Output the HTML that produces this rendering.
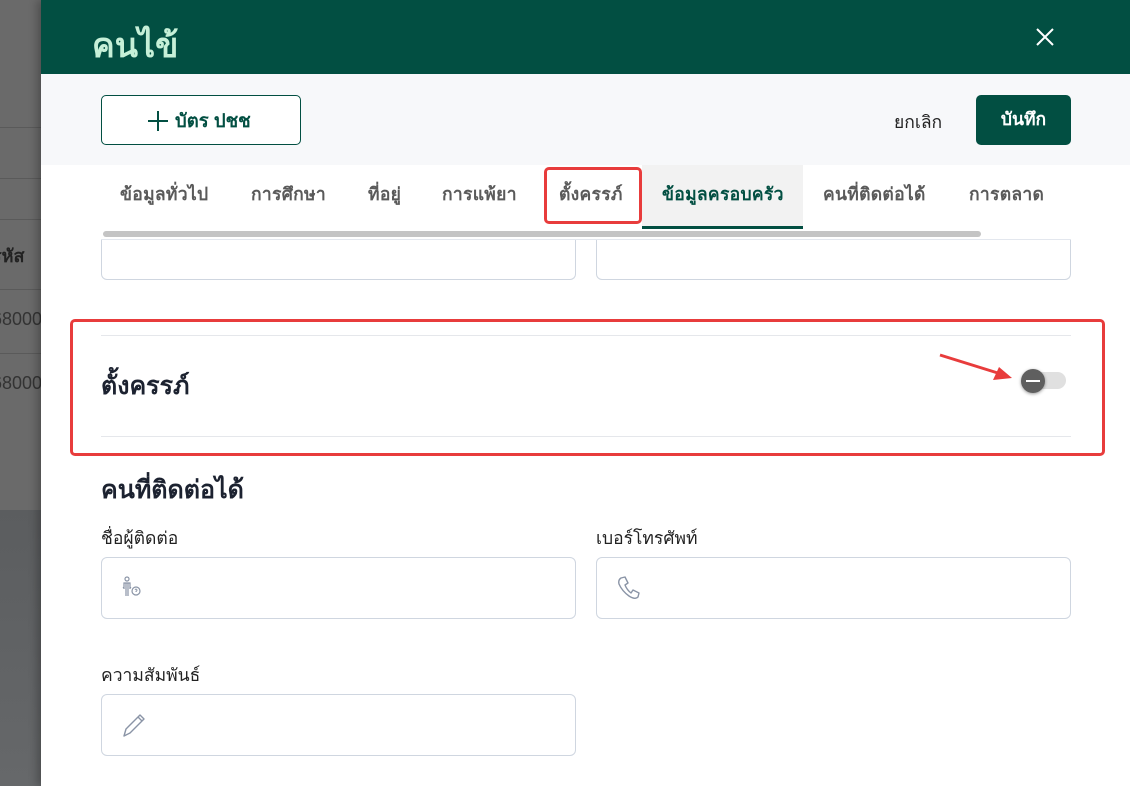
<!DOCTYPE html>
<html><head><meta charset="utf-8"><style>
*{box-sizing:border-box;margin:0;padding:0}
body{width:1130px;height:786px;overflow:hidden;position:relative;font-family:"Liberation Sans","DejaVu Sans",sans-serif;background:#fff}
.abs{position:absolute}
.left{left:0;top:0;width:41px;height:786px;background:linear-gradient(#6a6a6a 0,#6a6a6a 510px,#5b5d5f 510px,#66686a 786px);overflow:hidden}
.left .ln{position:absolute;left:0;width:41px;height:1px;background:#5a5a5a}
.left .t{position:absolute;left:-8px;color:#222;font-size:18px}
.drawer{left:41px;top:0;width:1089px;height:786px;background:#fff;box-shadow:-4px 0 8px rgba(0,0,0,.25)}
.hdr{left:41px;top:0;width:1089px;height:74px;background:#024f42}
.title{left:92px;top:18px;color:#c6f0d8;font-size:34px;font-weight:bold}
.bar{left:41px;top:74px;width:1089px;height:91px;background:#f7f8fa}
.tab{top:180px;font-size:17.5px;font-weight:bold;color:#5a5a5a;letter-spacing:.3px}
.inp{border:1px solid #cfd6e0;border-radius:6px;background:#fff}
.lbl{font-size:17.5px;color:#222}
.h{font-size:25px;font-weight:bold;color:#1c2230}
</style></head><body>
<div class="abs left">
<div class="ln" style="top:127px"></div><div class="ln" style="top:178px"></div><div class="ln" style="top:219px"></div><div class="ln" style="top:289px"></div><div class="ln" style="top:353px"></div>
<div class="t" style="top:241px;font-weight:bold">รหัส</div>
<div class="t" style="top:309px;color:#333">68000</div>
<div class="t" style="top:373px;color:#333">68000</div>
</div>
<div class="abs drawer"></div>
<div class="abs hdr"></div>
<div class="abs title">คนไข้</div>
<svg class="abs" style="left:1035px;top:27px" width="20" height="20" viewBox="0 0 20 20"><path d="M2 2L18 18M18 2L2 18" stroke="#fff" stroke-width="2"/></svg>
<div class="abs bar"></div>
<div class="abs" style="left:101px;top:95px;width:200px;height:50px;border:1px solid #024f42;border-radius:5px;background:#fff"></div>
<svg class="abs" style="left:147px;top:110px" width="22" height="22" viewBox="0 0 22 22"><path d="M11 1V21M1 11H21" stroke="#024f42" stroke-width="2"/></svg>
<div class="abs" style="left:175px;top:107px;font-size:18.5px;font-weight:bold;color:#024f42">บัตร ปชช</div>
<div class="abs" style="left:894px;top:108px;font-size:17.5px;color:#222">ยกเลิก</div>
<div class="abs" style="left:976px;top:95px;width:95px;height:50px;background:#024f42;border-radius:5px;color:#fff;font-size:17.5px;font-weight:bold;text-align:center;line-height:48px">บันทึก</div>
<div class="abs" style="left:642px;top:165px;width:161px;height:62px;background:#f2f2f2"></div>
<div class="abs" style="left:642px;top:226px;width:161px;height:3px;background:#024f42"></div>
<div class="abs tab" style="left:120px">ข้อมูลทั่วไป</div>
<div class="abs tab" style="left:251px">การศึกษา</div>
<div class="abs tab" style="left:368px">ที่อยู่</div>
<div class="abs tab" style="left:442px">การแพ้ยา</div>
<div class="abs tab" style="left:559px">ตั้งครรภ์</div>
<div class="abs tab" style="left:662px;color:#024f42">ข้อมูลครอบครัว</div>
<div class="abs tab" style="left:823px">คนที่ติดต่อได้</div>
<div class="abs tab" style="left:969px">การตลาด</div>
<div class="abs" style="left:544px;top:167px;width:98px;height:57px;border:3px solid #e83c3c;border-radius:5px"></div>
<div class="abs" style="left:103px;top:231px;width:878px;height:6px;background:#c4c4c4;border-radius:3px"></div>
<div class="abs" style="left:101px;top:239px;width:970px;height:1px;background:#e3e7ee"></div>
<div class="abs inp" style="left:101px;top:240px;width:475px;height:40px;border-top:none;border-radius:0 0 6px 6px"></div>
<div class="abs inp" style="left:596px;top:240px;width:475px;height:40px;border-top:none;border-radius:0 0 6px 6px"></div>
<div class="abs" style="left:70px;top:319px;width:1035px;height:137px;border:3px solid #e83c3c;border-radius:5px"></div>
<div class="abs" style="left:101px;top:335px;width:970px;height:1px;background:#e5e7eb"></div>
<div class="abs" style="left:101px;top:436px;width:970px;height:1px;background:#e5e7eb"></div>
<div class="abs h" style="left:101px;top:366px">ตั้งครรภ์</div>
<div class="abs" style="left:1026px;top:372px;width:40px;height:17px;background:#e0e0e0;border-radius:9px"></div>
<div class="abs" style="left:1021px;top:369px;width:24px;height:24px;background:#5f5f5f;border-radius:50%;box-shadow:0 1px 3px rgba(0,0,0,.4)"></div>
<div class="abs" style="left:1026px;top:380px;width:14px;height:2px;background:#fff"></div>
<svg class="abs" style="left:935px;top:350px" width="85" height="35" viewBox="0 0 85 35"><path d="M5 5L66 24" stroke="#e83c3c" stroke-width="3"/><path d="M77 28L58 30L64 17Z" fill="#e83c3c"/></svg>
<div class="abs h" style="left:101px;top:470px">คนที่ติดต่อได้</div>
<div class="abs lbl" style="left:101px;top:524px">ชื่อผู้ติดต่อ</div>
<div class="abs lbl" style="left:596px;top:524px">เบอร์โทรศัพท์</div>
<div class="abs inp" style="left:101px;top:557px;width:475px;height:62px"></div>
<div class="abs inp" style="left:596px;top:557px;width:475px;height:62px"></div>
<svg class="abs" style="left:121px;top:576px" width="28" height="24" viewBox="0 0 28 24"><circle cx="6" cy="3" r="2" fill="none" stroke="#8a94a6" stroke-width="1.2"/><path d="M3 13V7H9V13M5 7V20M7 7V20M3 11L2 12M9 11L10 12" fill="none" stroke="#8a94a6" stroke-width="1.2"/><circle cx="15" cy="15" r="4" fill="none" stroke="#8a94a6" stroke-width="1.2"/><path d="M14 14Q15 12 16 14Q16 15 15 15.5V16" fill="none" stroke="#8a94a6" stroke-width="1"/></svg>
<svg class="abs" style="left:615px;top:574px" width="28" height="28" viewBox="0 0 28 28"><path d="M6 4L10 3L13 9L10 11Q12 16 16 19L18 16L24 19L23 23Q20 26 14 22Q7 17 4 10Q3 6 6 4Z" fill="none" stroke="#8a94a6" stroke-width="1.4" stroke-linejoin="round"/></svg>
<div class="abs lbl" style="left:101px;top:661px">ความสัมพันธ์</div>
<div class="abs inp" style="left:101px;top:694px;width:475px;height:62px"></div>
<svg class="abs" style="left:120px;top:711px" width="30" height="28" viewBox="0 0 30 28"><path d="M4 25L6 18L20 4L24 8L10 22Z M18 6L22 10" fill="none" stroke="#8a94a6" stroke-width="1.4" stroke-linejoin="round"/></svg>
</body></html>
